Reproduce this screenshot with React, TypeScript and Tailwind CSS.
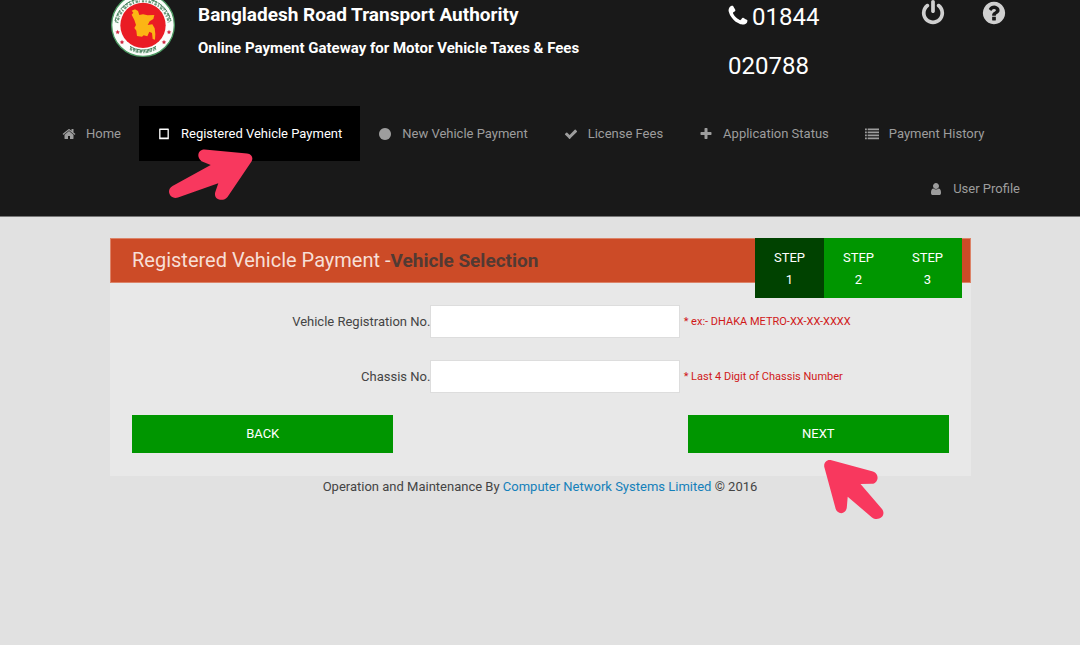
import type { ReactNode } from 'react'

const paths = {
    home: 'M1472 992v480q0 26-19 45t-45 19h-384v-384h-256v384h-384q-26 0-45-19t-19-45v-480q0-1 .5-3t.5-3l575-474 575 474q1 2 1 6zm223-69l-62 74q-8 9-21 11h-3q-13 0-21-7l-692-577-692 577q-12 8-24 7-13-2-21-11l-62-74q-8-10-7-23.5t11-21.5l719-599q32-26 76-26t76 26l244 204v-195q0-14 9-23t23-9h192q14 0 23 9t9 23v408l219 182q10 8 11 21.5t-7 23.5z',
    tablet: 'M336 200h1120q60 0 60 60v1260q0 60-60 60h-1120q-60 0-60-60v-1260q0-60 60-60zm110 170v980h900v-980z',
    circle: 'M1664 896q0 209-103 385.5t-279.5 279.5-385.5 103-385.5-103-279.5-279.5-103-385.5 103-385.5 279.5-279.5 385.5-103 385.5 103 279.5 279.5 103 385.5z',
    check: 'M1671 566q0 40-28 68l-724 724-136 136q-28 28-68 28t-68-28l-136-136-362-362q-28-28-28-68t28-68l136-136q28-28 68-28t68 28l294 295 656-657q28-28 68-28t68 28l136 136q28 28 28 68z',
    plus: 'M1600 736v192q0 40-28 68t-68 28h-416v416q0 40-28 68t-68 28h-192q-40 0-68-28t-28-68v-416h-416q-40 0-68-28t-28-68v-192q0-40 28-68t68-28h416v-416q0-40 28-68t68-28h192q40 0 68 28t28 68v416h416q40 0 68 28t28 68z',
    list: 'M0 192h230v220H0zM340 192h1452v220H340zM0 576h230v220H0zM340 576h1452v220H340zM0 960h230v220H0zM340 960h1452v220H340zM0 1344h230v220H0zM340 1344h1452v220H340z',
    user: 'M1536 1399q0 109-62.5 187t-150.5 78h-854q-88 0-150.5-78t-62.5-187q0-85 8.5-160.5t31.5-152 58.5-131 94-89 134.5-34.5q131 128 313 128t313-128q76 0 134.5 34.5t94 89 58.5 131 31.5 152 8.5 160.5zm-256-887q0 159-112.5 271.5t-271.5 112.5-271.5-112.5-112.5-271.5 112.5-271.5 271.5-112.5 271.5 112.5 112.5 271.5z',
    phone: 'M1600 1240q0 27-10 70.5t-21 68.5q-21 50-122 106-94 51-186 51-27 0-53-3.5t-57.5-12.5-47-14.5-55.5-20.5-49-18q-98-35-175-83-127-79-264-216t-216-264q-48-77-83-175-3-9-18-49t-20.5-55.5-14.5-47-12.5-57.5-3.5-53q0-92 51-186 56-101 106-122 25-11 68.5-21t70.5-10q14 0 21 3 18 6 53 76 11 19 30 54t35 63.5 31 53.5q3 4 17.5 25t21.5 35.5 7 28.5q0 20-28.5 50t-62 55-62 53-28.5 46q0 9 5 22.5t8.5 20.5 14 24 11.5 19q76 137 174 235t235 174q2 1 19 11.5t24 14 20.5 8.5 22.5 5q18 0 46-28.5t53-62 55-62 50-28.5q14 0 28.5 7t35.5 21.5 25 17.5q25 15 53.5 31t63.5 35 54 30q70 35 76 53 3 7 3 21z',
    power: 'M1664 896q0 156-61 298t-164 245-245 164-298 61-298-61-245-164-164-245-61-298q0-182 80.5-343t226.5-270q43-32 95.5-25t83.5 50q32 42 24.5 94.5t-49.5 84.5q-98 74-151.5 181t-53.5 228q0 104 40.5 198.5t109.5 163.5 163.5 109.5 198.5 40.5 198.5-40.5 163.5-109.5 109.5-163.5 40.5-198.5q0-121-53.5-228t-151.5-181q-42-32-49.5-84.5t24.5-94.5q31-43 84-50t95 25q146 109 226.5 270t80.5 343zm-640-768v640q0 52-38 90t-90 38-90-38-38-90v-640q0-52 38-90t90-38 90 38 38 90z',
    help: 'M1024 1376v-192q0-14-9-23t-23-9h-192q-14 0-23 9t-9 23v192q0 14 9 23t23 9h192q14 0 23-9t9-23zm256-672q0-88-55.5-163t-138.5-116-170-41q-243 0-371 213-15 24 8 42l132 100q7 6 19 6 16 0 25-12 53-68 86-92 34-24 86-24 48 0 85.5 26t37.5 59q0 38-20 61t-68 45q-63 28-115.5 86.5t-52.5 125.5v36q0 14 9 23t23 9h192q14 0 23-9t9-23q0-19 21.5-49.5t54.5-49.5q32-18 49-28.5t46-35 44.5-48 28-60.5 12.5-81zm384 192q0 209-103 385.5t-279.5 279.5-385.5 103-385.5-103-279.5-279.5-103-385.5 103-385.5 279.5-279.5 385.5-103 385.5 103 279.5 279.5 103 385.5z',
}

type IconProps = {
    name: keyof typeof paths
    className: string
}

function Icon({ name, className }: IconProps) {
    return (
        <svg
            viewBox="0 0 1792 1792"
            fill="currentColor"
            fillRule="evenodd"
            className={className}
            aria-hidden="true"
        >
            <path d={paths[name]} />
        </svg>
    )
}

function Seal() {
    return (
        <svg
            viewBox="64 -22 192 192"
            className="-mt-[7px] size-16 shrink-0"
            role="img"
            aria-label="Government seal"
        >
            <circle cx="160" cy="74" r="94" fill="#fbfdfa" stroke="#4c9a62" strokeWidth="4" />
            {/* lettering bands round the rim */}
            <g fill="none" stroke="#43805a">
                <path
                    d="M83 68A78 78 0 0 1 237 68"
                    strokeWidth="6"
                    strokeDasharray="4 5 8 3 2 6 7 4"
                    opacity=".8"
                />
                <path
                    d="M78 66A83 83 0 0 1 242 66"
                    strokeWidth="5"
                    strokeDasharray="7 4 3 5 9 3"
                    opacity=".7"
                />
                <path d="M76 62A86 86 0 0 1 244 62" strokeWidth="3" strokeDasharray="14 3 20 4" />
                <path
                    d="M121 146A82 82 0 0 0 199 146"
                    strokeWidth="6"
                    strokeDasharray="7 4 4 3 9 3"
                    opacity=".7"
                />
                <path
                    d="M122 142A78 78 0 0 0 198 142"
                    strokeWidth="6"
                    strokeDasharray="4 5 8 4"
                    opacity=".8"
                />
                <path d="M121 138A74 74 0 0 0 199 138" strokeWidth="3" strokeDasharray="16 2" />
            </g>
            <circle cx="160" cy="75" r="68" fill="#ea1c24" />
            <path
                d="M126 31l10-4 9 5 4 12 11-2 14 3 20-1-3 12-11 7-6 11 14-2 7 12 2 17-1 17-7-2-2-18-8-4-6 14-11-3-5 4-15-2-2-16-6-8 5-9-5-15-8-16 5-6z"
                fill="#fcb514"
            />
            <g fill="#cf2740">
                <path id="star" d="M84 88l2 5 5 1-4 3 1 5-4-3-4 3 1-5-4-3 5-1z" />
                <use href="#star" x="13" y="30" />
                <use href="#star" x="154" />
                <use href="#star" x="139" y="30" />
            </g>
        </svg>
    )
}

type NavItemProps = {
    icon: keyof typeof paths
    label: string
    active?: boolean
    className?: string
    children?: ReactNode
}

function NavItem({ icon, label, active, className = '', children }: NavItemProps) {
    return (
        <li className={`relative ${className}`}>
            <a
                href="#"
                aria-current={active ? 'page' : undefined}
                className={`flex h-[55px] items-center gap-2 pr-[18px] pl-4 ${
                    active ? 'bg-black text-white' : 'text-[#9d9d9d]'
                }`}
            >
                <span className="flex w-[18px] justify-center">
                    <Icon name={icon} className="size-[14px]" />
                </span>
                {label}
            </a>
            {children}
        </li>
    )
}

type FieldProps = {
    id: string
    label: string
    hint: string
}

function Field({ id, label, hint }: FieldProps) {
    return (
        <div className="grid grid-cols-[320fr_249fr_291fr] items-center">
            <label htmlFor={id} className="text-right">
                {label}
            </label>
            <input
                id={id}
                type="text"
                aria-describedby={`${id}-hint`}
                className="h-[33px] w-full border border-[#dddddd] bg-white px-2"
            />
            <span id={`${id}-hint`} className="pt-px pl-1 text-[11px] text-[#d01818]">
                {hint}
            </span>
        </div>
    )
}

export default function App() {
    const steps = [1, 2, 3]

    return (
        <div className="min-h-screen bg-[#e1e1e1] font-[Roboto,sans-serif] text-[13px] text-[#444444]">
            <header className="overflow-hidden border-b border-[#777777] bg-[#191919] text-white">
                <div className="flex h-[106px] items-start pr-[73px] pl-[111px]">
                    <Seal />
                    <div className="ml-[23px] flex-1">
                        <h1 className="text-[19px] leading-[30px] font-bold">
                            Bangladesh Road Transport Authority
                        </h1>
                        <h2 className="text-[15px] leading-9 font-bold">
                            Online Payment Gateway for Motor Vehicle Taxes & Fees
                        </h2>
                    </div>
                    <p className="-mt-[7px] mr-8 w-40 text-[24px] leading-[49px]">
                        <Icon name="phone" className="mr-0.5 -ml-0.5 inline size-6 align-[-3px]" />
                        01844 020788
                    </p>
                    <div className="flex gap-[35px] text-[#d0d0d0]">
                        <button type="button" aria-label="Log out">
                            <Icon name="power" className="size-[26px]" />
                        </button>
                        <button type="button" aria-label="Help">
                            <Icon name="help" className="size-[26px]" />
                        </button>
                    </div>
                </div>
                <nav>
                    <ul className="flex flex-wrap pr-[42px] pl-11">
                        <NavItem icon="home" label="Home" />
                        <NavItem icon="tablet" label="Registered Vehicle Payment" active>
                            <svg
                                viewBox="169 149 84 52"
                                className="pointer-events-none absolute top-[43px] left-[30px] z-10 h-[52px] w-[84px]"
                                aria-hidden="true"
                            >
                                <path
                                    d="M201.5 161.2C196 157 198 149.5 204.5 149.5L247 153.5C252 154 253.5 158 251.5 161.5L227.5 197C223 202.5 213 199.5 215.3 192L218.3 183.3 178 197.5C170 200 165.5 190 172.5 186L210.7 165z"
                                    fill="#f8385e"
                                />
                            </svg>
                        </NavItem>
                        <NavItem icon="circle" label="New Vehicle Payment" />
                        <NavItem icon="check" label="License Fees" />
                        <NavItem icon="plus" label="Application Status" />
                        <NavItem icon="list" label="Payment History" />
                        <NavItem icon="user" label="User Profile" className="ml-auto" />
                    </ul>
                </nav>
            </header>

            <main className="mt-[21px] mr-[109px] ml-[110px] bg-[#e8e8e8]">
                <div className="flex h-[45px] items-start border border-[#dc8368] bg-[#cc4b27] pr-2 pl-[21px]">
                    <h2 className="flex-1 text-[20px] leading-[43px] text-[#f7dfd6]">
                        Registered Vehicle Payment -
                        <strong className="text-[19px] font-bold text-[#523a33]">
                            Vehicle Selection
                        </strong>
                    </h2>
                    <ol className="-mt-px flex text-center leading-[22px] text-white">
                        {steps.map((step) => (
                            <li
                                key={step}
                                className={`h-[60px] w-[69px] px-4 pt-[9px] ${
                                    step === 1 ? 'bg-[#004200]' : 'bg-[#009600]'
                                }`}
                            >
                                STEP {step}
                            </li>
                        ))}
                    </ol>
                </div>
                <form onSubmit={(e) => e.preventDefault()}>
                    <div className="flex flex-col gap-[22px] pt-[22px]">
                        <Field
                            id="registration"
                            label="Vehicle Registration No."
                            hint="* ex:- DHAKA METRO-XX-XX-XXXX"
                        />
                        <Field
                            id="chassis"
                            label="Chassis No."
                            hint="* Last 4 Digit of Chassis Number"
                        />
                    </div>
                    <div className="flex justify-between px-[22px] pt-[22px] pb-[23px] text-white">
                        <button type="button" className="h-[38px] w-[32%] bg-[#009600]">
                            BACK
                        </button>
                        <div className="relative w-[32%]">
                            <button type="submit" className="h-[38px] w-full bg-[#009600]">
                                NEXT
                            </button>
                            <svg
                                viewBox="824 460 60 60"
                                className="pointer-events-none absolute top-[45px] left-[136px] size-[60px]"
                                aria-hidden="true"
                            >
                                <path
                                    d="M831.5 460.3L873 471.5C879.5 473.5 879 483 872 483.8L860.5 484 882 509C887 516 878 522 872 517.5L847.7 496.7 846.8 507.5C846 515 836.5 515 835.3 507.5L824.3 467C823.5 462.5 827 459 831.5 460.3z"
                                    fill="#f8385e"
                                />
                            </svg>
                        </div>
                    </div>
                </form>
            </main>

            <footer className="text-center leading-[22px]">
                Operation and Maintenance By{' '}
                <a href="#" className="text-[#1480ba]">
                    Computer Network Systems Limited
                </a>{' '}
                © 2016
            </footer>
        </div>
    )
}
